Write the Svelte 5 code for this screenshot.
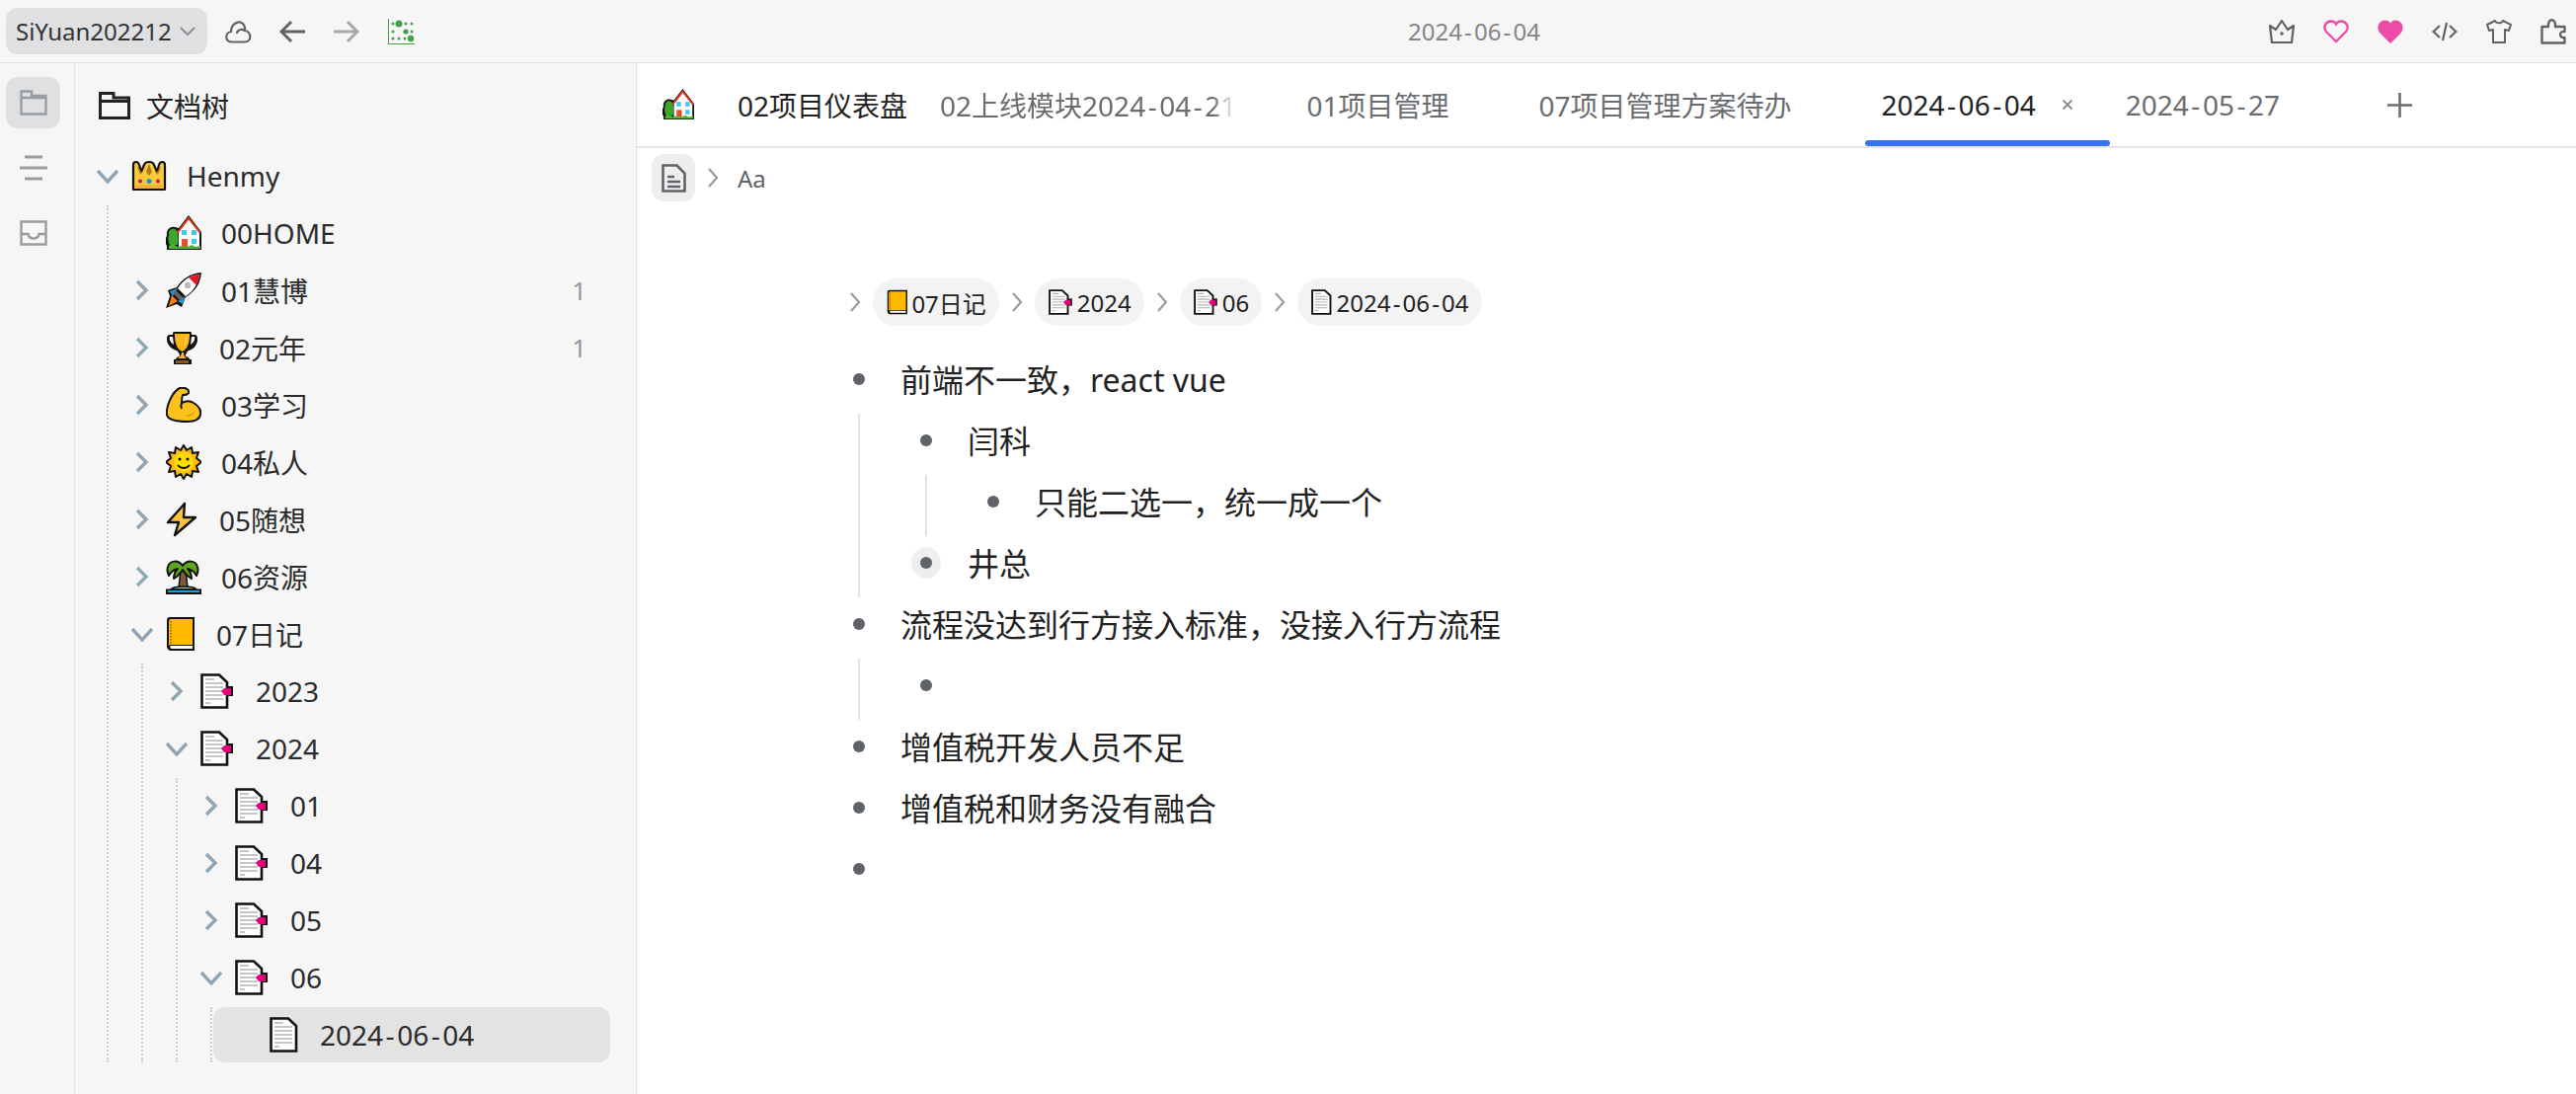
<script>
  const vb = { crown: 36, home: 36, rocket: 36, trophy: 34, arm: 36, sun: 36, bolt: 34, palm: 36, book: 31, docp: 36, doc: 31 };
  const tree = [
    { t: 'Henmy', i: 'crown', o: true, c: [
      { t: '00HOME', i: 'home', leaf: true },
      { t: '01慧博', i: 'rocket', n: 1 },
      { t: '02元年', i: 'trophy', n: 1 },
      { t: '03学习', i: 'arm' },
      { t: '04私人', i: 'sun' },
      { t: '05随想', i: 'bolt' },
      { t: '06资源', i: 'palm' },
      { t: '07日记', i: 'book', o: true, c: [
        { t: '2023', i: 'docp' },
        { t: '2024', i: 'docp', o: true, c: [
          { t: '01', i: 'docp' },
          { t: '04', i: 'docp' },
          { t: '05', i: 'docp' },
          { t: '06', i: 'docp', o: true, c: [
            { t: '2024-06-04', i: 'doc', leaf: true, sel: true }
          ] }
        ] }
      ] }
    ] }
  ];
  const tabs = [
    { t: '02项目仪表盘', home: true, plain: true, dark: true },
    { t: '02上线模块2024-04-21', fade: true },
    { t: '01项目管理' },
    { t: '07项目管理方案待办' },
    { t: '2024-06-04', active: true },
    { t: '2024-05-27' }
  ];
  const crumbs = [
    { t: '07日记', i: 'book' },
    { t: '2024', i: 'docp' },
    { t: '06', i: 'docp' },
    { t: '2024-06-04', i: 'doc' }
  ];
  const list = [
    { t: '前端不一致，react vue', c: [
      { t: '闫科', c: [{ t: '只能二选一，统一成一个' }] },
      { t: '井总', hot: true }
    ] },
    { t: '流程没达到行方接入标准，没接入行方流程', c: [{ t: '' }] },
    { t: '增值税开发人员不足' },
    { t: '增值税和财务没有融合' },
    { t: '' }
  ];
</script>

{#snippet dated(text)}
  {#each text.split('-') as part, i}{#if i > 0}<span class="hy">-</span>{/if}{part}{/each}
{/snippet}

{#snippet emoji(name, h)}
  <svg class="emoji" width={vb[name] * h / 36} height={h} viewBox="0 0 {vb[name]} 36" aria-hidden="true">
    {#if name === 'crown'}
      <path d="M2 7c0-4 5-4 6 0l2 7 3-7c1-4 9-4 10 0l3 7 2-7c1-4 6-4 6 0v25H2z" fill="#fcc93a" stroke="#111" stroke-width="2.200" stroke-linejoin="round"/>
      <path d="M5.500 8l3.500 9 2-2zM18 6l-3 8 3 4 3-4zM30.500 8l-3.500 9-2-2z" fill="#b5781a"/>
      <path d="M3 27h30v4H3z" fill="#f8b133"/>
      <circle cx="9" cy="23.500" r="2" fill="#c2185b"/><circle cx="18" cy="23.500" r="2.500" fill="#0a9cc4"/><circle cx="27" cy="23.500" r="2" fill="#c2185b"/>
    {:else if name === 'home'}
      <path d="M1 35v-4c-2-3-2-7 0-10-1-6 3-10 8-9l4 1L23 0l13 17v18z" fill="#111"/>
      <path d="M3 20c-1-5 3-7 6-6 4 1 4 12 3 16H4c-2-3-2-7-1-10z" fill="#3ba72f"/>
      <path d="M13 17 23 4l11 14v15H13z" fill="#fff"/>
      <path d="M11.500 18 23 3l12 15" fill="none" stroke="#e53b1c" stroke-width="2"/>
      <path d="M16 15h5v5h-5zM26 15h5v5h-5zM26 24h5v5h-5z" fill="#3dc8f5"/>
      <path d="M16 24h6v9h-6z" fill="#ee4d22"/>
      <path d="M3 34v-3l4-2 5 3 4-1 6 1 4-2 4 2 5-1v3z" fill="#46b72c"/>
    {:else if name === 'rocket'}
      <path d="M36 0C25 1 17 6 11 15l-9 3 2 6-4 12 11-4 5 3 4-10c10-6 15-14 16-25z" fill="#111"/>
      <path d="M34 2C24 3 18 7 12 16l8 8c8-5 13-13 14-22z" fill="#fff"/>
      <path d="M34 2c-4 0-8 2-11 3l8 8c1-3 3-7 3-11z" fill="#e3152e"/>
      <path d="M12 16l-8 3 3 5zM20 24l-3 8-5-3z" fill="#1f9bdf"/>
      <circle cx="22" cy="13" r="3.200" fill="#bbb"/>
      <path d="M10 18l8 8-3 3-8-8z" fill="#666"/>
      <path d="M6 23l6 6-9 5z" fill="#f57f17"/>
    {:else if name === 'trophy'}
      <path d="M8 2h17c1 0 1 2 1 3h3c3 0 3 3 3 5 0 6-5 10-9 11-2 2-3 3-3 6 2 0 4 2 4 3h2v5H8v-5h2c0-1 2-3 4-3 0-3-1-4-3-6-4-1-10-5-10-11 0-2 0-5 3-5h3c0-1 0-3 1-3z" fill="#111"/>
      <path d="M9 4h15c0 4 0 15-7.500 18C9 19 9 8 9 4z" fill="#fdb813"/>
      <path d="M4 7h3l1 8C5 13 3 10 4 7zM29 7h-3l-1 8c3-2 5-5 4-8z" fill="#f6f6f6"/>
      <path d="M16 23h2c0 3 1 4 3 6H12c2-2 4-3 4-6z" fill="#fdb813"/>
      <path d="M10 31h13v3H10z" fill="#8d5524"/>
      <path d="M20 7h1c0 5-1 8-3 10 1-3 2-6 2-10z" fill="#ffe082"/>
    {:else if name === 'arm'}
      <path d="M14 1c5-1 10 1 9 5-1 2-4 2-6 2-1 3-1 5-1 8 4-2 9-2 12 0 5 3 8 7 7 12-1 5-6 7-13 7C11 35 2 33 1 28 0 20 6 5 14 1z" fill="#fcc21b" stroke="#111" stroke-width="2" stroke-linejoin="round"/>
      <path d="M16 16c-1 2-1 4 0 6" fill="none" stroke="#111" stroke-width="2"/>
      <path d="M21 29c4 0 6-1 7-3" fill="none" stroke="#d9901a" stroke-width="1.500"/>
    {:else if name === 'sun'}
      <path d="M18 1l3 5 5-3 1 6 6-1-2 6 5 4-5 4 2 6-6-1-1 6-5-3-3 5-3-5-5 3-1-6-6 1 2-6-5-4 5-4-2-6 6 1 1-6 5 3z" fill="#fdb813" stroke="#111" stroke-width="2" stroke-linejoin="round"/>
      <circle cx="18" cy="18" r="10" fill="#fedc00"/>
      <circle cx="14" cy="15" r="1.500" fill="#111"/><circle cx="22" cy="15" r="1.500" fill="#111"/>
      <path d="M12 21c3 4 9 4 12 0" fill="none" stroke="#111" stroke-width="1.800"/>
    {:else if name === 'bolt'}
      <path d="M19 2 2 21h11l-4 13 21-18H18z" fill="#fcc13d" stroke="#111" stroke-width="2.400" stroke-linejoin="round"/>
    {:else if name === 'palm'}
      <path d="M15 11h5l2 18h-9z" fill="#7a5a3c" stroke="#111" stroke-width="1.500"/>
      <path d="M17 7C13 1 4 1 2 8c-1 3 0 7 1 9 2-4 5-6 9-7-3 3-4 6-4 10 4-2 7-6 9-9 2 3 5 7 9 9 0-4-1-7-4-10 4 1 7 3 9 7 1-2 2-6 1-9-2-7-11-7-15-1z" fill="#5ca81c" stroke="#111" stroke-width="2" stroke-linejoin="round"/>
      <path d="M5 31c3-4 23-4 26 0z" fill="#f6a623" stroke="#111" stroke-width="1.500"/>
      <path d="M0 30.500h36V36H0z" fill="#111"/>
      <path d="M2 32h32v2H2z" fill="#12a5cf"/>
    {:else if name === 'book'}
      <path d="M4 1h25v34H5c-2 0-4-2-4-4V4c0-2 1-3 3-3z" fill="#111"/>
      <path d="M5 3h22v26H5c-1 0-2 1-2 1V5c0-1 1-2 2-2z" fill="#ffb900"/>
      <path d="M5 30h22v3H6c-2 0-2-3-1-3z" fill="#fff"/>
      <path d="M5 5v23" stroke="#8a6a00" stroke-width="1.500" stroke-dasharray="1.500 1.500"/>
    {:else}
      <path d="M1.500 1.500H19L27 9v25.500H1.500z" fill="#fff" stroke="#111" stroke-width="2.600"/>
      <path d="M5 6h9M5 10h18M5 14h18M5 18h18M5 22h18M5 26h18M5 30h5" stroke="#b4b4b4" stroke-width="1.500"/>
      {#if name === 'docp'}
        <path d="M26 13h7v10h-7z" fill="#111"/>
        <path d="M21 18l3-3h7v7h-7z" fill="#e6007e"/>
      {/if}
    {/if}
  </svg>
{/snippet}

{#snippet chev(open)}
  <svg class="chev" width="22" height="22" viewBox="0 0 22 22" aria-hidden="true">
    {#if open}<path d="M1 6l10 11L21 6"/>{:else}<path d="M6 2l9 9-9 9"/>{/if}
  </svg>
{/snippet}

{#snippet node(item, level)}
  <div class="row" class:sel={item.sel} style="--l:{level}">
    <span class="slot">{#if !item.leaf}{@render chev(item.o)}{/if}</span>
    <span class="ic">{@render emoji(item.i, 36)}</span>
    <span class="label">{@render dated(item.t)}</span>
    {#if item.n}<span class="count">{item.n}</span>{/if}
  </div>
  {#if item.c}
    <div class="group" style="--l:{level}">
      {#each item.c as child}
        {@render node(child, level + 1)}
      {/each}
    </div>
  {/if}
{/snippet}

{#snippet li(item)}
  <div class="li" class:hot={item.hot}>
    <span class="bullet"><i></i></span>
    <span class="txt">{item.t}</span>
  </div>
  {#if item.c}
    <div class="sub">
      {#each item.c as child}
        {@render li(child)}
      {/each}
    </div>
  {/if}
{/snippet}

<div class="app">
  <header class="bar">
    <button class="ws">SiYuan202212
      <svg width="16" height="10" viewBox="0 0 16 10"><path d="M1 1l7 7 7-7" fill="none" stroke="#8b8f93" stroke-width="2"/></svg>
    </button>
    <svg class="cloud" width="27" height="24" viewBox="0 0 27 24" fill="none" stroke="#5f6368" stroke-width="2.200"><path d="M7 22.500c-8 0-7-10-1-10.500C6 4 14 0 18 4c2 2 2.500 4 2 7 7 1 7 11.500 0 11.500zM12 14c0-4 5-5 8-3"/></svg>
    <svg class="back" width="26" height="24" viewBox="0 0 26 24" fill="none" stroke="#5f6368" stroke-width="3"><path d="M26 12H2M12 2 2 12l10 10"/></svg>
    <svg class="fwd" width="26" height="24" viewBox="0 0 26 24" fill="none" stroke="#a8a8a8" stroke-width="3"><path d="M0 12h24M14 2l10 10-10 10"/></svg>
    <svg class="graph" width="27" height="26" viewBox="0 0 27 26" fill="#43a047"><path d="M0 0h1v25h27v1H0z"/><circle cx="11" cy="5" r="3.500"/><circle cx="5" cy="5" r="1.500"/><circle cx="18" cy="5" r="1.500"/><circle cx="24" cy="5" r="1.500"/><circle cx="5" cy="13" r="1.500"/><circle cx="18" cy="13" r="2.600"/><circle cx="24" cy="13" r="1.500"/><circle cx="5" cy="20" r="1.500"/><circle cx="11" cy="20" r="1.500"/><circle cx="17" cy="20" r="1.500"/><circle cx="23" cy="20" r="3.200"/></svg>
    <span class="title">{@render dated('2024-06-04')}</span>
    <div class="tools">
      <svg width="26" height="24" viewBox="0 0 26 24" fill="none" stroke="#5f6368" stroke-width="2.200" stroke-linejoin="round"><path d="M1 6l6 4 6-9 6 9 6-4-2 17H3z"/><circle cx="13" cy="14" r="1.800" fill="#5f6368" stroke="none"/></svg>
      <svg width="26" height="24" viewBox="0 0 26 24" fill="none" stroke="#ec4ba8" stroke-width="2.300"><path d="M13 22 3 12C-1 7 3 1.500 8 1.500c2 0 4 1 5 3 1-2 3-3 5-3 5 0 9 5.500 5 10.500z"/></svg>
      <svg width="26" height="24" viewBox="0 0 26 24" fill="#ec4ba8"><path d="M13 24 2 13C-2 7 2 .500 8 .500c2 0 4 1 5 3 1-2 3-3 5-3 6 0 10 6.500 6 12.500z"/></svg>
      <svg width="26" height="24" viewBox="0 0 26 24" fill="none" stroke="#5f6368" stroke-width="2.200"><path d="M8 6 1.500 12 8 18M18 6l6.500 6L18 18M15 3l-4 18"/></svg>
      <svg width="26" height="24" viewBox="0 0 26 24" fill="none" stroke="#5f6368" stroke-width="2" stroke-linejoin="round"><path d="M9 1c1 3 7 3 8 0l8 4-2 6-4-1v13H7V10l-4 1-2-6z"/></svg>
      <svg width="26" height="26" viewBox="0 0 26 26" fill="none" stroke="#5f6368" stroke-width="2.400" stroke-linejoin="round"><path d="M1.500 8H8c-1-9 8-9 7 0h9.500v5c-6-1-6 7 0 6v5.500H1.500z"/></svg>
    </div>
  </header>

  <div class="body">
    <nav class="rail">
      <div class="rail-item on">
        <svg width="28" height="26" viewBox="0 0 28 26" fill="none" stroke="#9a9da0" stroke-width="2.400"><path d="M1.500 24.500V1.500H12V6h14.500v18.500zM1.500 8h25"/></svg>
      </div>
      <div class="rail-item">
        <svg width="28" height="26" viewBox="0 0 28 26" fill="none" stroke="#9a9da0" stroke-width="3"><path d="M5 2h18M0 13h28M5 24h18"/></svg>
      </div>
      <div class="rail-item">
        <svg width="28" height="26" viewBox="0 0 28 26" fill="none" stroke="#9a9da0" stroke-width="2.400"><path d="M1.500 1.500h25v23h-25zM1.500 14h7c1 6 10 6 11 0h7"/></svg>
      </div>
    </nav>

    <aside class="panel">
      <div class="panel-head">
        <svg width="32" height="28" viewBox="0 0 32 28" fill="none" stroke="#222" stroke-width="3"><path d="M1.500 26.500v-25H15V6h15.500v20.500zM1.500 9.500h29"/></svg>
        <span>文档树</span>
      </div>
      <div class="tree">
        {#each tree as item}
          {@render node(item, 0)}
        {/each}
      </div>
    </aside>

    <main class="main">
      <div class="tabs">
        {#each tabs as tab}
          <div class="tab" class:active={tab.active} class:dark={tab.dark} class:plain={tab.plain}>
            {#if tab.home}<span class="tab-ic">{@render emoji('home', 32)}</span>{/if}
            <span class="tab-t" class:fade={tab.fade}>{@render dated(tab.t)}</span>
            {#if !tab.plain}
              <span class="x" class:tight={tab.fade}>
                {#if tab.active}
                  <svg width="14" height="14" viewBox="0 0 14 14" fill="none" stroke="#8a8d90" stroke-width="1.800"><path d="M2.500 2.500l9 9M11.500 2.500l-9 9"/></svg>
                {/if}
              </span>
            {/if}
          </div>
        {/each}
        <svg class="plus" width="25" height="25" viewBox="0 0 25 25" fill="none" stroke="#6b6e72" stroke-width="2.600"><path d="M12.500 0v25M0 12.500h25"/></svg>
      </div>

      <div class="crumbs">
        <span class="doc-btn">
          <svg width="25" height="29" viewBox="0 0 25 29" fill="none" stroke="#5f6368" stroke-width="2.600"><path d="M1.500 1.500h14l8 8v18h-22zM6 13h7M6 18h13M6 23h13"/></svg>
        </span>
        <svg class="c-arrow" width="12" height="22" viewBox="0 0 12 22" fill="none" stroke="#9a9da0" stroke-width="2.200"><path d="M2 2l8 9-8 9"/></svg>
        <span class="aa">Aa</span>
      </div>

      <article class="doc">
        <div class="path">
          <svg class="c-arrow" width="12" height="22" viewBox="0 0 12 22" fill="none" stroke="#9a9da0" stroke-width="2.200"><path d="M2 2l8 9-8 9"/></svg>
          {#each crumbs as c, i}
            {#if i > 0}
              <svg class="c-arrow" width="12" height="22" viewBox="0 0 12 22" fill="none" stroke="#9a9da0" stroke-width="2.200"><path d="M2 2l8 9-8 9"/></svg>
            {/if}
            <span class="pill">{@render emoji(c.i, 26)}<span>{@render dated(c.t)}</span></span>
          {/each}
        </div>
        <div class="list">
          {#each list as item}
            {@render li(item)}
          {/each}
        </div>
      </article>
    </main>
  </div>
</div>

<style>
  :global(body) { margin: 0; background: #fff; }
  .app {
    width: 2609px;
    height: 1108px;
    display: flex;
    flex-direction: column;
    overflow: hidden;
    font-family: "Noto Sans", "Noto Sans CJK SC", sans-serif;
    color: #222;
  }
  svg { display: block; flex: none; }
  .hy { padding: 0 .09em; }

  .bar {
    height: 63px;
    flex: none;
    display: flex;
    align-items: center;
    background: #f6f6f6;
    border-bottom: 1px solid #e2e2e2;
    padding: 0 10px 0 6px;
  }
  .ws {
    width: 204px;
    height: 47px;
    display: flex;
    align-items: center;
    gap: 8px;
    padding: 0 0 0 10px;
    border: 0;
    border-radius: 12px;
    background: #dfe0e2;
    font: 24px "Noto Sans", sans-serif;
    color: #333;
  }
  .cloud { margin-left: 18px; }
  .back { margin-left: 28px; }
  .fwd { margin-left: 29px; }
  .graph { margin-left: 29px; }
  .title {
    margin-left: 1006px;
    font-size: 24px;
    color: #858585;
  }
  .tools {
    margin-left: auto;
    display: flex;
    align-items: center;
    gap: 29px;
  }

  .body { flex: 1; display: flex; min-height: 0; }
  .rail {
    width: 76px;
    flex: none;
    box-sizing: border-box;
    background: #f6f6f6;
    border-right: 1px solid #e2e2e2;
    padding: 14px 0 0 6px;
    display: flex;
    flex-direction: column;
    gap: 14px;
  }
  .rail-item {
    width: 55px;
    height: 52px;
    border-radius: 12px;
    display: flex;
    align-items: center;
    justify-content: center;
  }
  .rail-item.on { background: #dfe0e2; }

  .panel {
    width: 569px;
    flex: none;
    box-sizing: border-box;
    background: #f6f6f6;
    border-right: 1px solid #e2e2e2;
  }
  .panel-head {
    height: 86px;
    display: flex;
    align-items: center;
    gap: 16px;
    padding: 0 0 0 24px;
    font-size: 28px;
  }
  .tree { display: flex; flex-direction: column; gap: 2px; }
  .row {
    height: 56px;
    margin-left: calc(35px * var(--l));
    margin-right: 26px;
    padding-left: 20px;
    display: flex;
    align-items: center;
    border-radius: 12px;
    font-size: 28px;
    color: #2b2b2b;
  }
  .row.sel { background: #e3e3e3; }
  .slot {
    width: 26px;
    height: 26px;
    flex: none;
    display: flex;
    align-items: center;
    justify-content: center;
  }
  .chev { fill: none; stroke: #8fa5b4; stroke-width: 3.400; }
  .ic { margin-left: 11px; margin-right: 20px; display: flex; }
  .label { white-space: nowrap; }
  .count { margin-left: auto; margin-right: 24px; color: #95989b; font-size: 26px; }
  .group {
    position: relative;
    display: flex;
    flex-direction: column;
    gap: 2px;
  }
  .group::before {
    content: "";
    position: absolute;
    top: 0;
    bottom: 0;
    left: calc(32px + 35px * var(--l));
    border-left: 2px dotted #c3d0da;
  }

  .main { flex: 1; min-width: 0; background: #fff; }
  .tabs {
    height: 84px;
    display: flex;
    align-items: center;
    padding-left: 10px;
    border-bottom: 2px solid #e4e4e4;
  }
  .tab {
    position: relative;
    height: 84px;
    display: flex;
    align-items: center;
    padding: 0 0 0 16px;
    font-size: 28px;
    color: #6a6d70;
    white-space: nowrap;
  }
  .tab.plain { padding-right: 17px; }
  .tab.dark, .tab.active { color: #222; }
  .tab-ic { margin-right: 44px; }
  .tab-t.fade {
    display: block;
    -webkit-mask-image: linear-gradient(to right, #000 92%, transparent);
    mask-image: linear-gradient(to right, #000 92%, transparent);
  }
  .x {
    margin-left: 24px;
    width: 16px;
    margin-right: 35px;
    display: flex;
    justify-content: center;
  }
  .x.tight { margin-right: 15px; }
  .tab.active::after {
    content: "";
    position: absolute;
    left: 0;
    right: 0;
    bottom: 0;
    height: 6px;
    border-radius: 3px;
    background: #3574f0;
  }
  .plus { margin-left: 34px; }

  .crumbs {
    margin-top: 6px;
    padding-left: 15px;
    height: 48px;
    display: flex;
    align-items: center;
  }
  .doc-btn {
    width: 44px;
    height: 48px;
    border-radius: 12px;
    background: #eeeeee;
    display: flex;
    align-items: center;
    justify-content: center;
  }
  .crumbs .c-arrow { margin-left: 12px; }
  .aa { margin-left: 19px; font-size: 24px; color: #5f6368; }

  .doc { padding: 78px 0 0 215px; }
  .path { display: flex; align-items: center; gap: 12px; }
  .pill {
    height: 48px;
    padding: 0 13px 0 14px;
    display: flex;
    align-items: center;
    gap: 3px;
    border-radius: 24px;
    background: #f3f3f3;
    font-size: 24px;
    color: #222;
  }
  .list { margin-top: 23px; font-size: 32px; color: #222; }
  .li {
    height: 62px;
    display: flex;
    align-items: center;
  }
  .txt { padding-bottom: 2px; }
  .bullet {
    width: 20px;
    height: 32px;
    flex: none;
    display: flex;
    align-items: center;
    justify-content: center;
    border-radius: 50%;
    margin-right: 32px;
  }
  .bullet i { width: 12px; height: 12px; border-radius: 50%; background: #5f6368; }
  .hot .bullet { width: 30px; margin-left: -5px; margin-right: 27px; background: #eeeeee; }
  .sub { position: relative; padding-left: 68px; }
  .sub::before {
    content: "";
    position: absolute;
    left: 9px;
    top: 4px;
    bottom: -4px;
    border-left: 2px solid #e4e4e4;
  }
</style>
